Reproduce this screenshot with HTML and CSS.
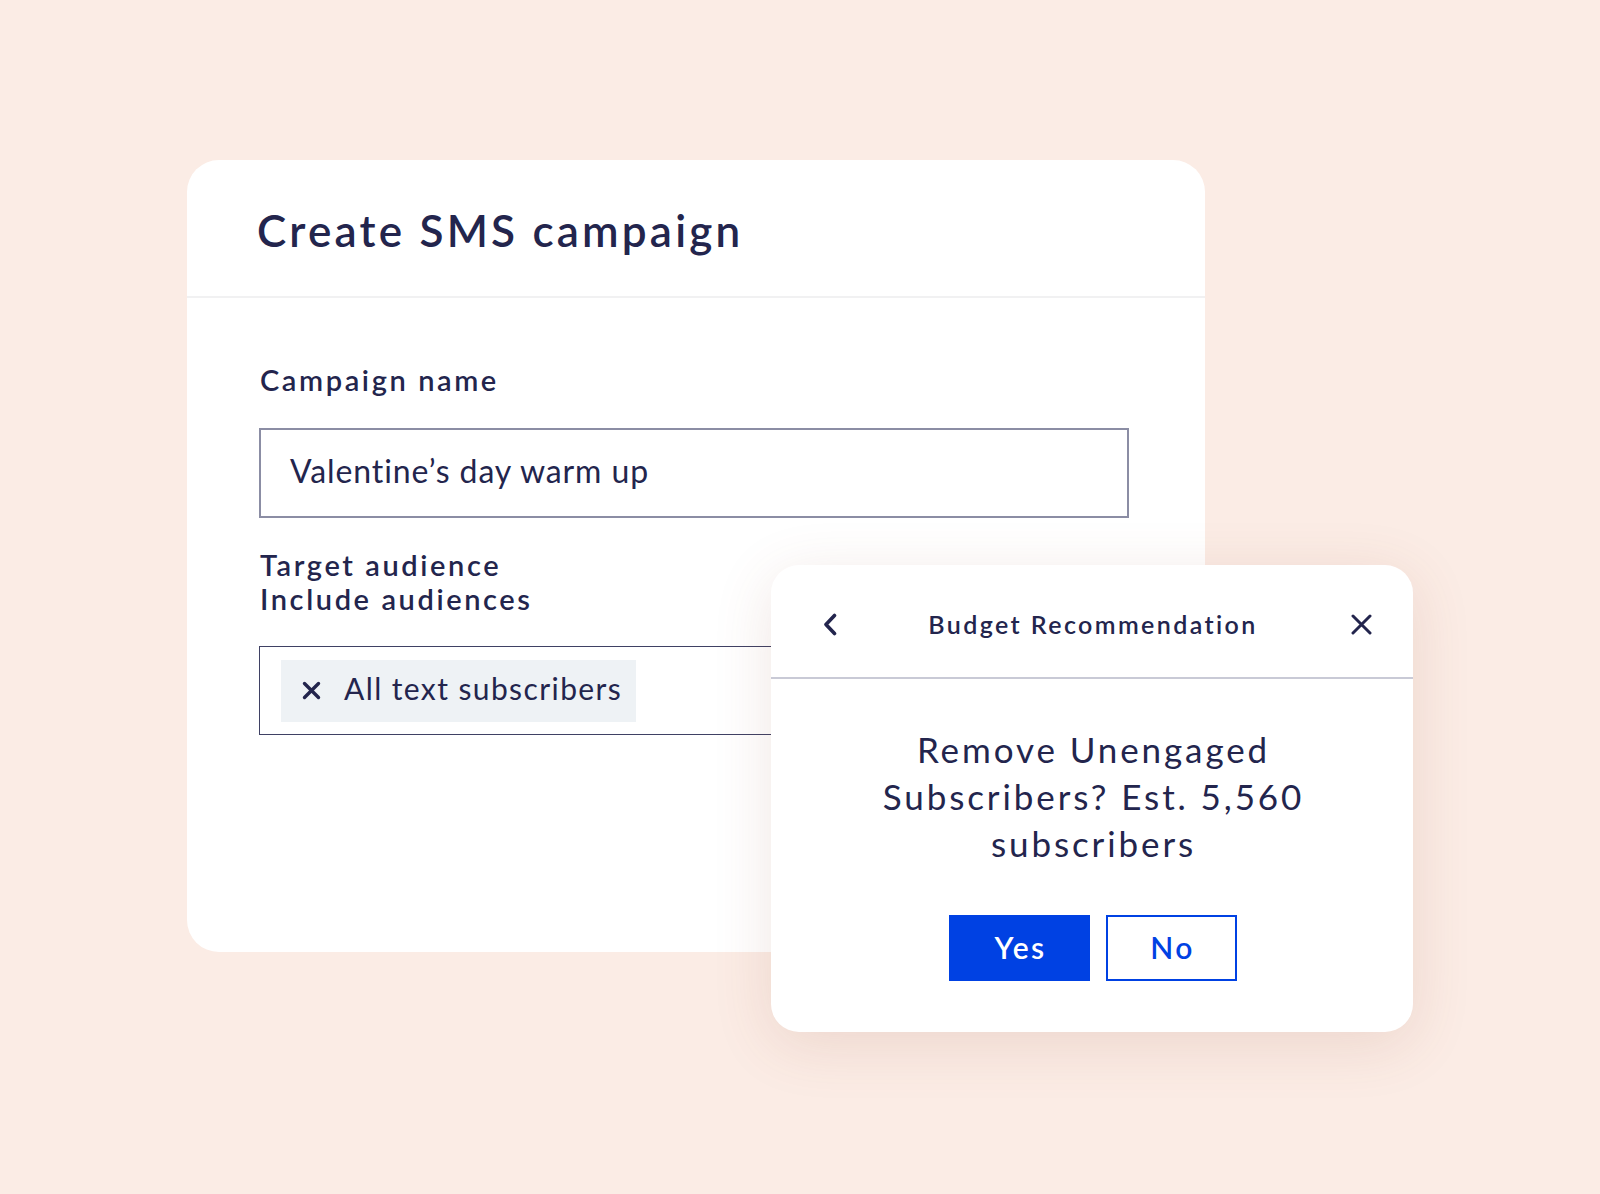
FILE: index.html
```html
<!doctype html>
<html lang="en">
  <head>
    <meta charset="UTF-8" />
    <meta name="viewport" content="width=device-width, initial-scale=1.0" />
    <title>Create SMS campaign</title>
    <link rel="stylesheet" href="styles.css">
  </head>
  <body>
    <div class="stage">
      <div class="card">
        <div class="card-header">
          <h1 class="card-title">Create SMS campaign</h1>
        </div>
        <div class="card-body">
          <div class="field-label">Campaign name</div>
          <div class="text-input">Valentine’s day warm up</div>
          <div class="field-label audience-label">Target audience<br />Include audiences</div>
          <div class="tag-input">
            <span class="tag">
              <svg class="tag-remove" width="19" height="19" viewBox="0 0 19 19">
                <path d="M2.5 2.5L16.5 16.5M16.5 2.5L2.5 16.5" stroke="#23254d" stroke-width="3.4" stroke-linecap="round" fill="none" />
              </svg>
              <span class="tag-text">All text subscribers</span>
            </span>
          </div>
        </div>
      </div>

      <div class="popup">
        <div class="popup-header">
          <svg class="popup-back" width="14" height="23" viewBox="0 0 14 23">
            <path d="M11.5 2.5L3 11.5L11.5 20.5" stroke="#23254d" stroke-width="3.6" stroke-linecap="round" stroke-linejoin="round" fill="none" />
          </svg>
          <div class="popup-title">Budget Recommendation</div>
          <svg class="popup-close" width="21" height="21" viewBox="0 0 21 21">
            <path d="M2 2L19 19M19 2L2 19" stroke="#23254d" stroke-width="3" stroke-linecap="round" fill="none" />
          </svg>
        </div>
        <div class="popup-body">
          <p class="popup-text">Remove Unengaged<br />Subscribers? Est. 5,560<br />subscribers</p>
          <div class="popup-actions">
            <button class="btn btn-yes">Yes</button>
            <button class="btn btn-no">No</button>
          </div>
        </div>
      </div>
    </div>
  </body>
</html>
```

FILE: styles.css
```css
body {
  margin: 0;
  background-color: #fbece5;
  font-family: "Lato", "Liberation Sans", sans-serif;
  color: #23254d;
}
.stage {
  position: relative;
  width: 1600px;
  height: 1194px;
  overflow: hidden;
}
.card {
  margin: 160px 0 0 187px;
  width: 1018px;
  height: 792px;
  background-color: white;
  border-radius: 32px;
}
.card-header {
  box-sizing: border-box;
  height: 138px;
  padding: 44px 0 0 70px;
  border-bottom: 2px solid #f1f1f2;
}
.card-title {
  margin: 0;
  font-size: 44px;
  line-height: 52px;
  font-weight: 600;
  letter-spacing: 3.2px;
}
.card-body {
  padding: 64px 0 0 73px;
}
.field-label {
  font-size: 29px;
  line-height: 36px;
  font-weight: 600;
  letter-spacing: 2.6px;
}
.text-input {
  box-sizing: border-box;
  display: flex;
  align-items: center;
  width: 870px;
  height: 90px;
  margin: 30px 0 0 -1px;
  padding: 0 0 5px 29px;
  border: 2px solid #8b8da4;
  font-size: 32px;
  letter-spacing: 0.9px;
}
.audience-label {
  margin-top: 30px;
  line-height: 34px;
}
.tag-input {
  box-sizing: border-box;
  display: flex;
  align-items: center;
  width: 870px;
  height: 89px;
  margin: 30px 0 0 -1px;
  padding: 0 21px;
  border: 1px solid #3f4164;
}
.tag {
  display: flex;
  align-items: center;
  gap: 23px;
  height: 62px;
  padding: 0 14px 0 21px;
  background-color: #eef2f5;
  font-size: 30px;
  letter-spacing: 1.4px;
}
.tag-text {
  padding-bottom: 5px;
}
.popup {
  position: absolute;
  left: 771px;
  top: 565px;
  width: 642px;
  height: 467px;
  background-color: white;
  border-radius: 28px;
  box-shadow: 0 12px 60px rgba(150, 80, 60, 0.14);
}
.popup-header {
  box-sizing: border-box;
  display: grid;
  grid-template-columns: 1fr auto 1fr;
  align-items: center;
  height: 114px;
  padding: 6px 41px 0 41px;
  border-bottom: 2px solid #c9cad6;
}
.popup-back {
  justify-self: start;
  margin-left: 11px;
}
.popup-close {
  justify-self: end;
}
.popup-title {
  font-size: 25px;
  font-weight: 600;
  letter-spacing: 2.4px;
  padding-left: 2px;
}
.popup-body {
  padding-top: 47px;
  text-align: center;
}
.popup-text {
  margin: 0;
  font-size: 35px;
  line-height: 47px;
  letter-spacing: 2.9px;
  padding-left: 3px;
}
.popup-actions {
  display: flex;
  justify-content: center;
  gap: 16px;
  margin-top: 48px;
  padding-left: 2px;
}
.btn {
  box-sizing: border-box;
  height: 66px;
  padding: 0 0 3px 2px;
  font-family: inherit;
  font-size: 30px;
  font-weight: 600;
  letter-spacing: 2.4px;
  border: 2px solid #0041e3;
  cursor: pointer;
}
.btn-yes {
  width: 141px;
  background-color: #0041e3;
  color: white;
}
.btn-no {
  width: 131px;
  background-color: white;
  color: #0041e3;
}
```
